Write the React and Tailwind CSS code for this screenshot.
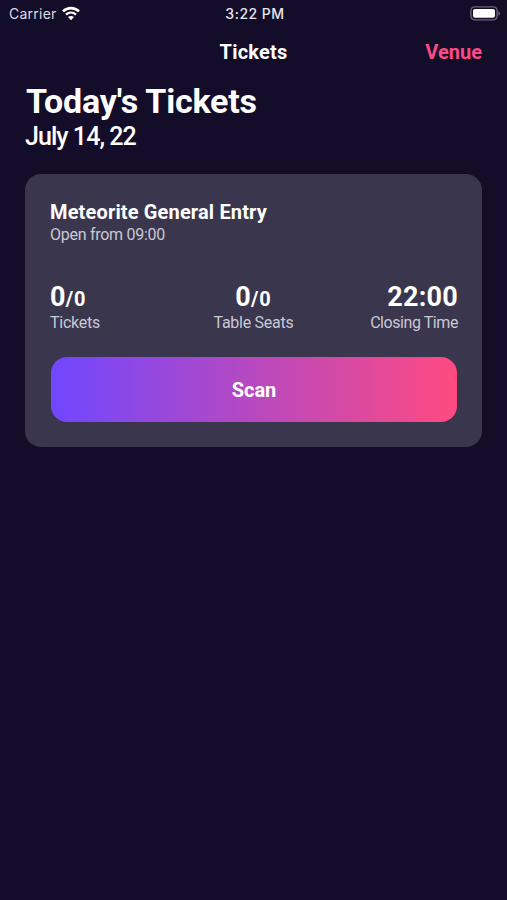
function WifiIcon() {
  return (
    <svg width="20" height="15" viewBox="0 0 20 15" fill="none" className="ml-1">
      <path d="M2 5.4C6.6 1 13.4 1 18 5.4" stroke="white" strokeWidth="2.6" />
      <path d="M5 8.7C7.9 5.9 12.1 5.9 15 8.7" stroke="white" strokeWidth="2.4" />
      <path d="M10 14.2L7 11.1C8.7 9.5 11.3 9.5 13 11.1Z" fill="white" />
    </svg>
  );
}

function BatteryIcon() {
  return (
    <svg width="31" height="15" viewBox="0 0 31 15" fill="none">
      <rect x="0.9" y="0.9" width="26.2" height="13" rx="3.8" stroke="#686277" strokeWidth="1.4" />
      <rect x="3" y="3" width="22" height="8.8" rx="2" fill="white" />
      <path d="M28.4 5.2C30.5 5.9 30.5 8.9 28.4 9.6Z" fill="#686277" />
    </svg>
  );
}

function Stat({ value, total, label, className = "", labelClass = "" }) {
  return (
    <div className={className}>
      <p className="text-[27px] leading-8 font-bold tracking-[0.25px] whitespace-nowrap">
        {value}
        {total && <span className="text-xl tracking-[0.8px]">/{total}</span>}
      </p>
      <p className={`text-base leading-5 whitespace-nowrap text-[#cbc9d4] ${labelClass}`}>{label}</p>
    </div>
  );
}

export default function App() {
  return (
    <div className="h-[900px] w-full overflow-hidden bg-[#140d29] font-['Roboto',sans-serif] text-white">
      {/* Status bar */}
      <div className="grid h-[27px] grid-cols-3 items-center pl-[9px] pr-[6px] font-['Inter',sans-serif] text-[14px]">
        <div className="flex items-center">
          <span className="tracking-[0.25px] text-[#dddbe3]">Carrier</span>
          <WifiIcon />
        </div>
        <span className="text-center font-medium tracking-[0.5px] text-[#e8e6ee]">3:22 PM</span>
        <div className="flex justify-end">
          <BatteryIcon />
        </div>
      </div>

      {/* Navigation bar */}
      <div className="mt-px grid h-12 grid-cols-3 items-center px-[25px] text-xl font-bold">
        <span className="col-start-2 text-center tracking-[0.2px]">Tickets</span>
        <button className="text-right text-[#fb4a86]">Venue</button>
      </div>

      <div className="px-[25px]">
        <h1 className="mt-[5px] pl-px text-[34px] leading-10 font-bold tracking-[-0.2px] whitespace-nowrap">
          Today's Tickets
        </h1>
        <p className="mt-px text-[25px] leading-[30px] font-medium tracking-[-0.95px] whitespace-nowrap">
          July 14, 22
        </p>

        {/* Ticket card */}
        <div className="mt-[22px] h-[273px] rounded-2xl bg-[#39364e] px-[25px] pt-[26px]">
          <h2 className="text-xl leading-6 font-bold tracking-[0.15px] whitespace-nowrap">
            Meteorite General Entry
          </h2>
          <p className="mt-px text-base leading-5 tracking-[-0.27px] text-[#cbc9d4]">Open from 09:00</p>

          <div className="mt-9 grid grid-cols-3">
            <Stat value="0" total="0" label="Tickets" labelClass="tracking-[-0.25px]" />
            <Stat value="0" total="0" label="Table Seats" className="text-center" labelClass="tracking-[-0.27px]" />
            <Stat value="22:00" label="Closing Time" className="-mr-px text-right" labelClass="tracking-[-0.43px]" />
          </div>

          <div className="mt-6 pl-px">
            <button className="h-[65px] w-full rounded-2xl bg-linear-to-r/srgb from-[#7047ff] to-[#ff4a80] text-xl font-bold">
              Scan
            </button>
          </div>
        </div>
      </div>
    </div>
  );
}
